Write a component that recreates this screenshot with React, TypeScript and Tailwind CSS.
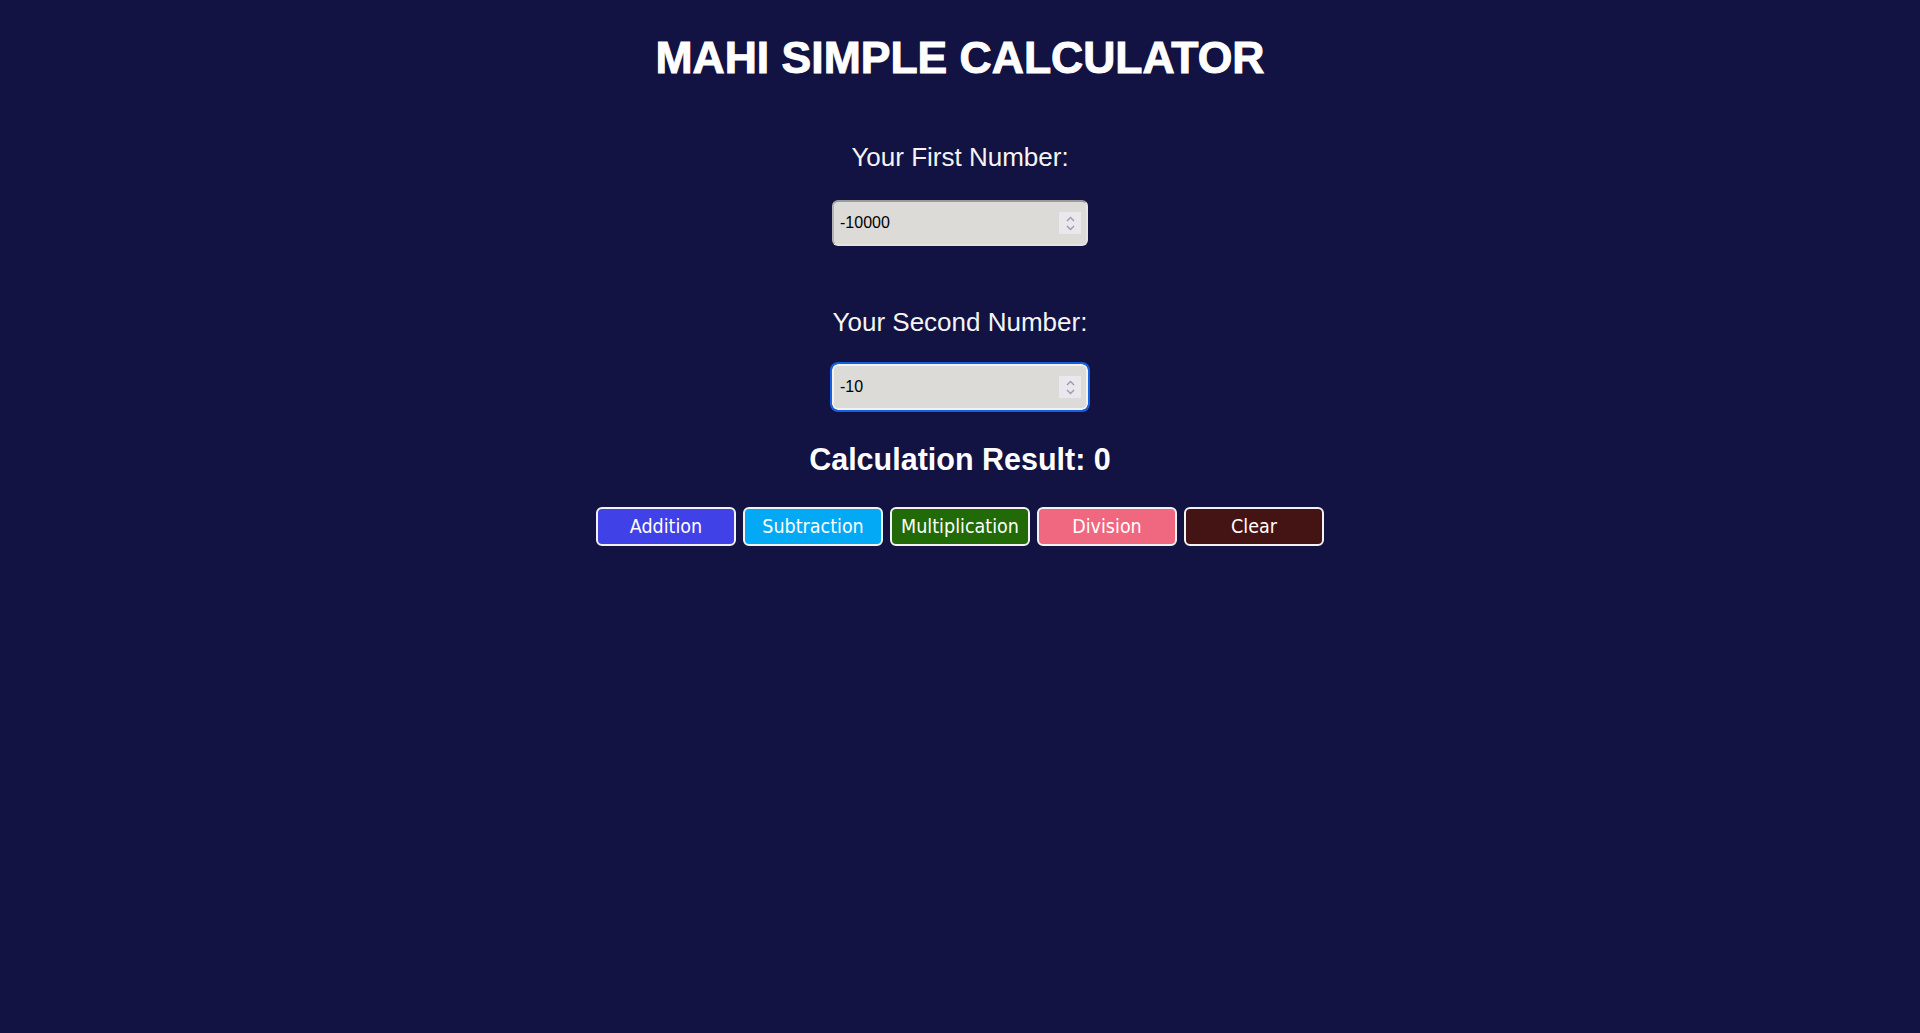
import { useState } from "react";

function Spinner() {
  return (
    <div className="pointer-events-none absolute right-[7px] top-1/2 -translate-y-1/2 w-[22px] h-[22px] bg-[#e9e8ed] flex flex-col items-center justify-center gap-[3px]">
      <svg width="9" height="6" viewBox="0 0 9 6" fill="none">
        <path d="M1 5L4.5 1.5L8 5" stroke="#9c9aab" strokeWidth="1.4" />
      </svg>
      <svg width="9" height="6" viewBox="0 0 9 6" fill="none">
        <path d="M1 1L4.5 4.5L8 1" stroke="#9c9aab" strokeWidth="1.4" />
      </svg>
    </div>
  );
}

export default function App() {
  const [first, setFirst] = useState("-10000");
  const [second, setSecond] = useState("-10");
  const [result, setResult] = useState<number | string>(0);

  const a = parseFloat(first) || 0;
  const b = parseFloat(second) || 0;

  const buttons = [
    { label: "Addition", cls: "bg-[#4141e8]", fn: () => setResult(a + b) },
    { label: "Subtraction", cls: "bg-[#03a9f4]", fn: () => setResult(a - b) },
    { label: "Multiplication", cls: "bg-[#216a07]", fn: () => setResult(a * b) },
    { label: "Division", cls: "bg-[#f0687f]", fn: () => setResult(b === 0 ? "Error" : a / b) },
    {
      label: "Clear",
      cls: "bg-[#441414]",
      fn: () => {
        setFirst("");
        setSecond("");
        setResult(0);
      },
    },
  ];

  return (
    <div className="min-h-screen bg-[#121243] text-white font-['Liberation_Sans',Arial,sans-serif] flex flex-col items-center">
      <h1 className="mt-[36px] text-[44.5px] leading-[44px] font-bold [-webkit-text-stroke:1px_white]">MAHI SIMPLE CALCULATOR</h1>

      <label className="mt-[62px] text-[26px] leading-[30px] text-[#f4f4f4]">Your First Number:</label>
      <div className="relative mt-[28px]">
        <input
          type="text"
          value={first}
          onChange={(e) => setFirst(e.target.value)}
          className="w-[256px] h-[46px] rounded-[6px] bg-[#dcdbd8] border-2 border-t-[#9a9a9a] border-l-[#b4b4b4] border-r-[#e4e4e4] border-b-[#e4e4e4] pl-[6px] text-[16px] text-black outline-none"
        />
        <Spinner />
      </div>

      <label className="mt-[61px] text-[26px] leading-[30px] text-[#f4f4f4]">Your Second Number:</label>
      <div className="relative mt-[27px]">
        <input
          type="text"
          value={second}
          onChange={(e) => setSecond(e.target.value)}
          className="w-[256px] h-[46px] rounded-[6px] bg-[#dcdbd8] border-2 border-[#f2f2f2] outline-2 outline-solid outline-[#1560e0] pl-[6px] text-[16px] text-black"
        />
        <Spinner />
      </div>

      <h3 className="mt-[31px] text-[30.5px] leading-[36px] font-bold">Calculation Result: {result}</h3>

      <div className="mt-[30px] flex gap-[7px]">
        {buttons.map((btn) => (
          <button
            key={btn.label}
            onClick={btn.fn}
            className={`${btn.cls} w-[140px] h-[39px] rounded-[6px] border-2 border-[#f2f2f2] text-white text-[19.5px] font-['DejaVu_Sans',sans-serif] font-stretch-condensed flex items-center justify-center`}
          >
            {btn.label}
          </button>
        ))}
      </div>
    </div>
  );
}
